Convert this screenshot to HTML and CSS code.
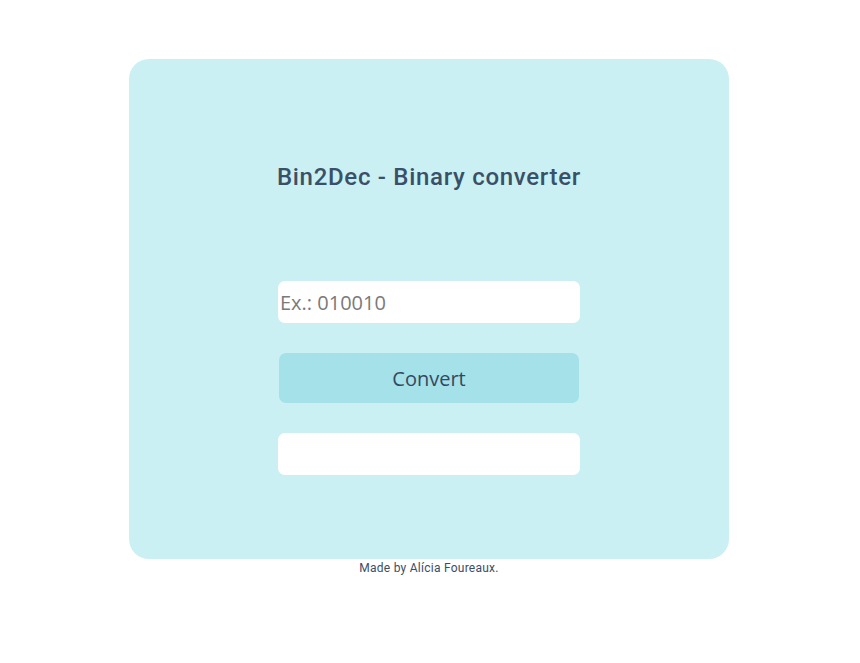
FILE: index.html
```html
<!DOCTYPE html>
<html>
<head>
<meta charset="utf-8">
<link rel="stylesheet" href="styles.css">
</head>
<body>
<main class="page">
  <section class="card">
    <h1 class="title">Bin2Dec - Binary converter</h1>
    <div class="form">
      <input class="field" type="text" placeholder="Ex.: 010010">
      <button class="btn">Convert</button>
      <input class="field" type="text">
    </div>
  </section>
  <p class="footer">Made by Alícia Foureaux.</p>
</main>
</body>
</html>
```
FILE: styles.css
```css
* { box-sizing: border-box; }
body {
  margin: 0;
  background: #fff;
  font-family: Roboto, "Liberation Sans", sans-serif;
  color: #34495e;
}
.page {
  display: flex;
  flex-direction: column;
  align-items: center;
  padding-top: 59px;
  padding-right: 2px;
}
.card {
  width: 600px;
  height: 500px;
  background: #cbf0f3;
  border-radius: 20px;
  display: flex;
  flex-direction: column;
  align-items: center;
}
.title {
  margin: 0;
  margin-top: 102px;
  font-size: 24px;
  font-weight: 500;
  letter-spacing: 0.7px;
  line-height: 32px;
  color: #3a5068;
}
.form {
  margin-top: 88px;
  display: flex;
  flex-direction: column;
  align-items: center;
  gap: 30px;
}
.field {
  width: 302px;
  height: 42px;
  border: none;
  border-radius: 7px;
  background: #fff;
  padding: 0 2px;
  font-family: "Open Sans", sans-serif;
  font-size: 20px;
  color: #34495e;
  outline: none;
}
.field::placeholder { color: #7a7a7a; }
.btn {
  width: 300px;
  height: 50px;
  border: none;
  border-radius: 7px;
  background: #a4e1e8;
  font-family: "Open Sans", sans-serif;
  font-size: 20px;
  color: #34495e;
}
.footer {
  margin: 1px 0 0;
  font-size: 12px;
  letter-spacing: 0.25px;
  line-height: 16px;
  color: #3a4e66;
}
```
